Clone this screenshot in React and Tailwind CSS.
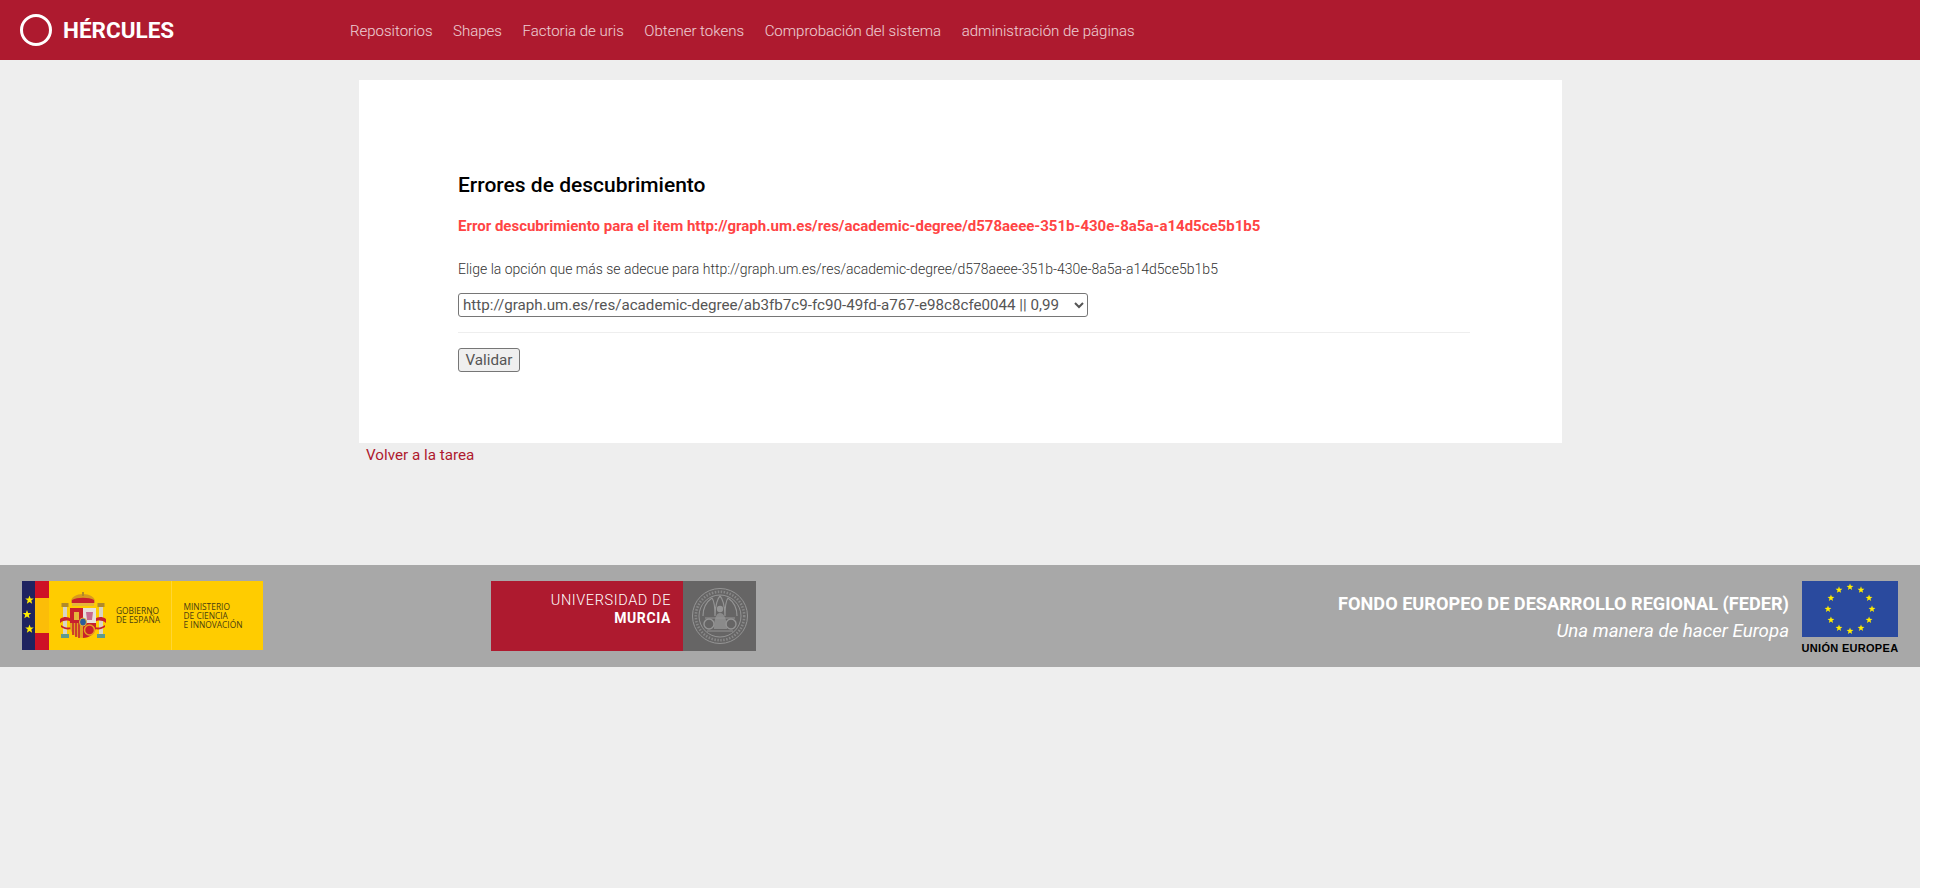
const navItems = [
  "Repositorios",
  "Shapes",
  "Factoria de uris",
  "Obtener tokens",
  "Comprobación del sistema",
  "administración de páginas",
];

const euStars = Array.from({ length: 12 }, (_, i) => {
  const a = (i * Math.PI) / 6;
  return { x: 48 + 22 * Math.sin(a), y: 28 - 22 * Math.cos(a) };
});

function Star({ x, y, r = 3, fill = "#ffed00" }) {
  const pts = [];
  for (let i = 0; i < 10; i++) {
    const rad = i % 2 === 0 ? r : r * 0.42;
    const a = (i * Math.PI) / 5;
    pts.push(`${(x + rad * Math.sin(a)).toFixed(2)},${(y - rad * Math.cos(a)).toFixed(2)}`);
  }
  return <polygon points={pts.join(" ")} fill={fill} />;
}

// Escudo de España simplificado
function Crest() {
  return (
    <svg width="46" height="48" viewBox="0 0 46 48" className="blur-[0.4px]">
      {/* columnas */}
      <rect x="3" y="14" width="4" height="28" fill="#d8d4c4" />
      <rect x="39" y="14" width="4" height="28" fill="#d8d4c4" />
      <rect x="1.5" y="11" width="7" height="4" fill="#b08a2a" />
      <rect x="37.5" y="11" width="7" height="4" fill="#b08a2a" />
      <rect x="1" y="42" width="8" height="4" fill="#5f9a8c" />
      <rect x="37" y="42" width="8" height="4" fill="#5f9a8c" />
      {/* cintas */}
      <path d="M0 27 C4 24 9 25 11 27 L11 30 C8 28 4 28 0 31 Z" fill="#c8202c" />
      <path d="M46 27 C42 24 37 25 35 27 L35 30 C38 28 42 28 46 31 Z" fill="#c8202c" />
      <path d="M1 33 C5 36 8 36 11 35 L11 37 C7 38 4 37 1 35 Z" fill="#c8202c" />
      <path d="M45 33 C41 36 38 36 35 35 L35 37 C39 38 42 37 45 35 Z" fill="#c8202c" />
      {/* corona */}
      <path d="M11 11 C10 5 17 2 23 2 C29 2 36 5 35 11 Z" fill="#d89a1e" />
      <path d="M12 8 C17 5 29 5 34 8 L34 11 L12 11 Z" fill="#c8202c" />
      <rect x="12" y="11" width="22" height="3" fill="#e6b53a" />
      <rect x="22" y="0" width="2" height="4" fill="#b08a2a" />
      {/* cuarteles */}
      <path d="M10 16 H23 V31 H10 Z" fill="#c8202c" />
      <path d="M23 16 H36 V31 H23 Z" fill="#e6e0dc" />
      <path d="M10 31 H23 V46 C17 46 10 42 10 34 Z" fill="#e0a020" />
      <path d="M23 31 H36 V34 C36 42 29 46 23 46 Z" fill="#c8202c" />
      <path d="M13 31 V43 M16 31 V45 M19 31 V46" stroke="#c8202c" strokeWidth="1.5" />
      <rect x="14" y="20" width="5" height="8" fill="#e6b53a" />
      <path d="M26 20 L33 20 L32 28 L27 28 Z" fill="#c86a90" />
      <circle cx="29.5" cy="38" r="5" fill="none" stroke="#e6a020" strokeWidth="1.5" />
      <ellipse cx="23" cy="30" rx="3.5" ry="4" fill="#2b5d9c" stroke="#e6b53a" />
    </svg>
  );
}

function SpainLogo() {
  return (
    <div className="flex h-[69px] w-[241px] bg-[#ffcc00]">
      <div className="flex w-[13px] shrink-0 flex-col items-center justify-center bg-[#1f2360]">
        <svg width="13" height="42" viewBox="0 0 13 42">
          <Star x={7.5} y={5} r={4.5} />
          <Star x={5} y={19.5} r={4.5} />
          <Star x={7.5} y={34} r={4.5} />
        </svg>
      </div>
      <div className="flex w-[13.5px] shrink-0 flex-col">
        <div className="h-[17px] bg-[#ce1126]" />
        <div className="flex-1 bg-[#fcbd08]" />
        <div className="h-[17px] bg-[#ce1126]" />
      </div>
      <div className="flex w-[123px] shrink-0 items-center border-r border-[#ffd633] pl-[11.5px]">
        <Crest />
        <div className="ml-[10px] mt-[-2px] font-['Open_Sans',sans-serif] text-[8.4px] leading-[9px] text-[#4a3d10]">
          GOBIERNO
          <br />
          DE ESPAÑA
        </div>
      </div>
      <div className="ml-[12px] mt-[-1px] self-center font-['Open_Sans',sans-serif] text-[8.4px] leading-[9px] text-[#4a3d10]">
        MINISTERIO
        <br />
        DE CIENCIA
        <br />E INNOVACIÓN
      </div>
    </div>
  );
}

// Sello de la universidad
function Seal() {
  return (
    <svg width="58" height="58" viewBox="0 0 58 58" fill="none" stroke="#959595">
      <circle cx="29" cy="29" r="27.5" strokeWidth="1" />
      <circle cx="29" cy="29" r="21" strokeWidth="1" />
      <circle cx="29" cy="29" r="24.2" strokeWidth="2.6" strokeDasharray="1.5 1.5" opacity="0.7" />
      <path d="M12 29 C12 18 18 13 21 11 C24 15 24 22 24 29 M24 29 C24 18 27 11 29 9 C31 11 34 18 34 29 M34 29 C34 22 34 15 37 11 C40 13 46 18 46 29" strokeWidth="1.2" />
      <circle cx="29" cy="22" r="3.2" fill="#959595" stroke="none" />
      <path d="M23 42 C23 32 25 26 29 26 C33 26 36 32 36 42 Z" fill="#8a8a8a" stroke="none" />
      <circle cx="18" cy="37" r="5" strokeWidth="1.4" />
      <circle cx="40" cy="37" r="5" strokeWidth="1.4" />
      <path d="M14 31 H44 M16 44 H42" strokeWidth="1" />
    </svg>
  );
}

function MurciaLogo() {
  return (
    <div className="flex h-[70px] w-[265px]">
      <div className="flex w-[192px] flex-col items-end bg-[#ae1a2f] pr-[12px] pt-[11px] font-['Roboto',sans-serif] text-white">
        <span className="text-[14.5px] font-light leading-[18px] tracking-[0.6px]">UNIVERSIDAD DE</span>
        <span className="text-[14px] font-bold leading-[17px] tracking-[0.6px]">MURCIA</span>
      </div>
      <div className="flex flex-1 items-center justify-center bg-[#666565]">
        <Seal />
      </div>
    </div>
  );
}

function EuLogo() {
  return (
    <div className="flex w-[96px] flex-col items-center">
      <svg width="96" height="56" viewBox="0 0 96 56" className="block">
        <rect width="96" height="56" fill="#2a4a9e" />
        {euStars.map((s, i) => (
          <Star key={i} x={s.x} y={s.y} r={3.6} />
        ))}
      </svg>
      <span className="mt-[5px] whitespace-nowrap font-['Liberation_Sans',sans-serif] text-[11px] font-bold leading-[12px] tracking-[0.3px] text-black">
        UNIÓN EUROPEA
      </span>
    </div>
  );
}

export default function App() {
  return (
    <div className="min-h-[888px] w-[1920px] bg-[#eeeeee] font-['Roboto',sans-serif]">
      {/* Header */}
      <header className="flex h-[60px] items-center bg-[#ae1a2f] pl-[20px]">
        <a className="flex w-[330px] items-center text-white" href="#">
          <span className="h-[32px] w-[32px] rounded-full border-[3px] border-white" />
          <span className="ml-[11px] text-[22.5px] font-bold leading-[30px]">HÉRCULES</span>
        </a>
        <nav className="mt-[2px] flex gap-[20.6px]">
          {navItems.map((item) => (
            <a key={item} href="#" className="text-[15px] font-light text-white/80">
              {item}
            </a>
          ))}
        </nav>
      </header>

      {/* Contenido */}
      <main className="ml-[359px] w-[1203px] pt-[20px]">
        <section className="h-[363px] bg-white pl-[99px] pr-[92px] pt-[92px]">
          <h2 className="text-[21px] font-medium leading-[27px] text-black">Errores de descubrimiento</h2>
          <p className="mt-[17px] text-[15px] font-bold leading-[20px] text-[#ff4444]">
            Error descubrimiento para el item http://graph.um.es/res/academic-degree/d578aeee-351b-430e-8a5a-a14d5ce5b1b5
          </p>
          <p className="mt-[23px] text-[14px] font-light leading-[20px] text-[#333333]">
            Elige la opción que más se adecue para http://graph.um.es/res/academic-degree/d578aeee-351b-430e-8a5a-a14d5ce5b1b5
          </p>
          <select className="mt-[14px] block h-[24px] w-[630px] rounded-[3px] border border-[#767676] bg-white text-[15.15px] font-normal text-[#555555]">
            <option>http://graph.um.es/res/academic-degree/ab3fb7c9-fc90-49fd-a767-e98c8cfe0044 || 0,99</option>
          </select>
          <hr className="mt-[15px] border-t border-[#eeeeee]" />
          <button className="mt-[15px] block h-[24px] w-[62px] rounded-[3px] border border-[#767676] bg-[#efefef] text-[15.2px] text-[#555555]">
            Validar
          </button>
        </section>
        <a href="#" className="ml-[7px] mt-[1px] block text-[15.2px] font-normal leading-[22px] text-[#ae1a2f]">
          Volver a la tarea
        </a>
      </main>

      {/* Footer */}
      <footer className="mt-[99px] flex h-[102px] items-start bg-[#a8a8a8] pl-[22px] pr-[22px] pt-[16px]">
        <SpainLogo />
        <div className="ml-[228px]">
          <MurciaLogo />
        </div>
        <div className="ml-auto mr-[13px] mt-[10px] text-right text-white">
          <div className="text-[18.15px] font-bold leading-[26px]">FONDO EUROPEO DE DESARROLLO REGIONAL (FEDER)</div>
          <div className="mt-[1px] text-[18.7px] font-normal italic leading-[26px]">Una manera de hacer Europa</div>
        </div>
        <EuLogo />
      </footer>
    </div>
  );
}
